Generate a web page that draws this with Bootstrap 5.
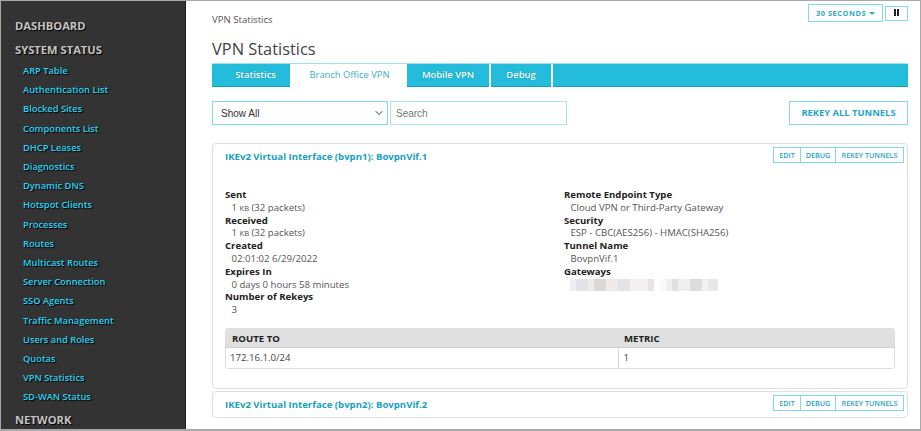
<!DOCTYPE html>
<html lang="en">
<head>
<meta charset="utf-8">
<title>VPN Statistics</title>
<link href="https://cdn.jsdelivr.net/npm/bootstrap@5.3.0/dist/css/bootstrap.min.css" rel="stylesheet">
<style>
html,body{height:100%;overflow:hidden}
body{font-family:"Open Sans",sans-serif;font-size:9.6px;color:#444;background:#fff}
.shell{height:431px;border:1px solid #a9a9a9;border-width:1px 1px 2px 1px;overflow:hidden}
.side{width:185px;flex:none;background:#333;border-right:1px solid #1e1e1e;padding-top:15px;overflow:hidden;height:100%}
.side-head{display:block;color:#c4c4c4;font-weight:700;font-size:11.2px;line-height:19px;padding-left:14px;margin-bottom:5px;text-decoration:none;text-shadow:1px 1px 1px #000}
.side-link{display:block;color:#27d3f3;font-weight:600;font-size:9.3px;line-height:19.2px;padding-left:22px;text-decoration:none;text-shadow:1px 1px 1px #000}
.side-list{margin-top:-3px;margin-bottom:3px}
.main-area{width:734px;flex:none;padding:0 12px 0 26px;position:relative}
.crumb{line-height:14px;padding-top:12px;color:#555}
.page-title{font-size:16.4px;font-weight:400;color:#444;line-height:24px;margin:10px 0 2px}
.tabbar{background:#23bcdb;border:0;border-bottom:1px solid #0ea2c2;border-top:1px solid #9fe0ee;height:24px;gap:0;flex-wrap:nowrap}
.tabbar .nav-link{height:23px;font-size:9.4px;font-weight:600;color:#fff;border:0;border-right:2px solid #fff;border-radius:0;padding:0;display:flex;align-items:center;justify-content:center;margin:0;background:transparent;text-shadow:0 0 1px #0b7f98}
.tabbar .nav-link.active{height:25px;margin-top:-1px;background:#fff;color:#3aaecb;font-weight:400;border:0;border-top:1px solid #9fe0ee;text-shadow:none;padding-bottom:1px}
.w-stat{width:80px;padding-left:9px!important}.w-branch{width:115px}.w-mobile{width:84px}.w-debug{width:62px}
.tool-row{margin-top:14px;height:24px}
.pick{width:176px;height:24px;font-family:"Liberation Sans",sans-serif;font-size:10px;padding:0 0 0 8px;border:1px solid #7fdcee;border-radius:0;color:#333;background-size:10px 8px;background-position:right 3px center}
.find{width:177px;height:24px;font-family:"Liberation Sans",sans-serif;font-size:10px;padding:0 5px;border:1px solid #a6e5f2;border-radius:0;margin-left:2px;color:#555}
.find::placeholder{color:#777;opacity:1}
.rekey-all{width:119px;height:24px;padding:0;font-size:9.4px;font-weight:700;color:#1fa6c7;border:1px solid #7fdcee;border-radius:0;background:#fff}
.vpn-card{border:1px solid #e0e0e0;border-radius:4px;background:#fff;--bs-card-border-color:#e0e0e0}
.vpn-card+.vpn-card{margin-top:2px}
.first-card{margin-top:18px;height:246px}
.second-card{height:27px}
.card-top{height:25px;padding:3px 3px 0 12px}
.card-name{font-size:9.6px;font-weight:700;color:#17a0c4;text-decoration:none;line-height:19px}
.mini{--bs-btn-padding-x:0;--bs-btn-padding-y:0;--bs-btn-border-radius:0;height:16px;font-size:7.2px;font-weight:600;line-height:14px;color:#1fa6c7;border:1px solid #7fdcee;background:#fff}
.mini-e{width:28px}.mini-d{width:36px}.mini-r{width:69px}
.detail{padding:20px 12px 0;line-height:12.8px;height:159px}
.detail dt{font-weight:700;color:#222;margin:0}
.detail dd{margin:0 0 0 6.5px;color:#555;height:12.8px}
.detail .col-left{width:339px;flex:none;padding:0}
.detail .col-right{flex:1;padding:0}
.kb{font-size:7.6px}
.route-wrap{margin:0 12px;border:1px solid #dcdcdc;border-radius:3px;overflow:hidden}
.route{margin:0;font-size:9.6px;table-layout:fixed;--bs-table-border-color:#d5d5d5}
.route th{background:#e0e0e0;height:18px;padding:0 6px;font-weight:700;color:#222;line-height:17px;border-bottom:1px solid #cfcfcf}
.route td{height:21px;padding:0 0 0 4px;line-height:20px;color:#444;border:0}
.route .split{border-left:1px solid #d5d5d5;padding-left:5px}
.route th.split{border-left:0;padding-left:6px}
.c-a{width:392px}
.refresh{position:absolute;top:3px;right:12px;display:flex;gap:2px;align-items:flex-start}
.btn-secs{width:75px;height:18px;padding:0;font-size:7.4px;font-weight:700;letter-spacing:.55px;color:#2ca9c8;border:1px solid #7fdcee;border-radius:0;background:#fff;line-height:15px}
.btn-secs::after{border-top-width:3px;border-right-width:3px;border-left-width:3px;vertical-align:1px;margin-left:3px}
.btn-pause{width:23px;height:15px;padding:0;border:1px solid #7fdcee;border-radius:0;margin-top:2px;background:#fff;display:flex;justify-content:center;gap:1px;padding-top:2px}
.btn-pause i{display:block;width:2px;height:7px;background:#222}
.blur-mask{display:block;margin-left:-1px;margin-top:0}
</style>
</head>
<body>
<div class="shell d-flex">
  <nav class="side">
    <a class="side-head" href="#">DASHBOARD</a>
    <a class="side-head" href="#">SYSTEM STATUS</a>
    <div class="side-list">
      <a class="side-link" href="#">ARP Table</a>
      <a class="side-link" href="#">Authentication List</a>
      <a class="side-link" href="#">Blocked Sites</a>
      <a class="side-link" href="#">Components List</a>
      <a class="side-link" href="#">DHCP Leases</a>
      <a class="side-link" href="#">Diagnostics</a>
      <a class="side-link" href="#">Dynamic DNS</a>
      <a class="side-link" href="#">Hotspot Clients</a>
      <a class="side-link" href="#">Processes</a>
      <a class="side-link" href="#">Routes</a>
      <a class="side-link" href="#">Multicast Routes</a>
      <a class="side-link" href="#">Server Connection</a>
      <a class="side-link" href="#">SSO Agents</a>
      <a class="side-link" href="#">Traffic Management</a>
      <a class="side-link" href="#">Users and Roles</a>
      <a class="side-link" href="#">Quotas</a>
      <a class="side-link" href="#">VPN Statistics</a>
      <a class="side-link" href="#">SD-WAN Status</a>
    </div>
    <a class="side-head" href="#">NETWORK</a>
  </nav>
  <main class="main-area">
    <div class="refresh">
      <button class="btn btn-secs dropdown-toggle" type="button">30 SECONDS</button>
      <button class="btn btn-pause" type="button" aria-label="Pause"><i></i><i></i></button>
    </div>
    <div class="crumb">VPN Statistics</div>
    <h1 class="page-title">VPN Statistics</h1>
    <ul class="nav nav-tabs tabbar">
      <li class="nav-item"><a class="nav-link w-stat" href="#">Statistics</a></li>
      <li class="nav-item"><a class="nav-link active w-branch" href="#">Branch Office VPN</a></li>
      <li class="nav-item"><a class="nav-link w-mobile" href="#">Mobile VPN</a></li>
      <li class="nav-item"><a class="nav-link w-debug" href="#">Debug</a></li>
    </ul>
    <div class="tool-row d-flex align-items-center">
      <select class="form-select pick" aria-label="Filter"><option>Show All</option></select>
      <input class="form-control find" type="text" placeholder="Search">
      <button class="btn rekey-all ms-auto" type="button">REKEY ALL TUNNELS</button>
    </div>
    <section class="card vpn-card first-card">
      <div class="card-top d-flex justify-content-between">
        <a class="card-name" href="#">IKEv2 Virtual Interface (bvpn1): BovpnVif.1</a>
        <div class="btn-group">
          <button class="btn mini mini-e" type="button">EDIT</button>
          <button class="btn mini mini-d" type="button">DEBUG</button>
          <button class="btn mini mini-r" type="button">REKEY TUNNELS</button>
        </div>
      </div>
      <div class="detail d-flex">
        <dl class="col-left m-0">
          <dt>Sent</dt><dd>1 <span class="kb">KB</span> (32 packets)</dd>
          <dt>Received</dt><dd>1 <span class="kb">KB</span> (32 packets)</dd>
          <dt>Created</dt><dd>02:01:02 6/29/2022</dd>
          <dt>Expires In</dt><dd>0 days 0 hours 58 minutes</dd>
          <dt>Number of Rekeys</dt><dd>3</dd>
        </dl>
        <dl class="col-right m-0">
          <dt>Remote Endpoint Type</dt><dd>Cloud VPN or Third-Party Gateway</dd>
          <dt>Security</dt><dd>ESP - CBC(AES256) - HMAC(SHA256)</dd>
          <dt>Tunnel Name</dt><dd>BovpnVif.1</dd>
          <dt>Gateways</dt>
          <dd><svg class="blur-mask" width="148" height="12" viewBox="0 0 148 12" aria-hidden="true">
            <rect width="148" height="12" fill="#f6f6f6"/>
            <rect x="0" width="6" height="12" fill="#eceef1"/><rect x="6" width="12" height="12" fill="#e2e4e9"/><rect x="18" width="6" height="12" fill="#ececec"/><rect x="24" width="12" height="12" fill="#dcdad8"/><rect x="36" width="12" height="12" fill="#eeeae8"/><rect x="48" width="12" height="12" fill="#e4e2e2"/><rect x="60" width="18" height="12" fill="#f2f0f0"/><rect x="78" width="6" height="12" fill="#e6e4e4"/><rect x="84" width="6" height="12" fill="#fff"/><rect x="90" y="0" width="6" height="12" fill="#f9f9f9"/><rect x="96" width="6" height="12" fill="#eef0f2"/><rect x="102" width="6" height="12" fill="#e0e0e0"/><rect x="108" width="12" height="12" fill="#eeeeee"/><rect x="120" width="12" height="12" fill="#dedcdc"/><rect x="132" width="6" height="12" fill="#f1f1f1"/><rect x="138" width="10" height="12" fill="#e8e8e8"/>
          </svg></dd>
        </dl>
      </div>
      <div class="route-wrap">
        <table class="table route">
          <colgroup><col class="c-a"><col></colgroup>
          <thead><tr><th>ROUTE TO</th><th class="split">METRIC</th></tr></thead>
          <tbody><tr><td>172.16.1.0/24</td><td class="split">1</td></tr></tbody>
        </table>
      </div>
    </section>
    <section class="card vpn-card second-card">
      <div class="card-top d-flex justify-content-between">
        <a class="card-name" href="#">IKEv2 Virtual Interface (bvpn2): BovpnVif.2</a>
        <div class="btn-group">
          <button class="btn mini mini-e" type="button">EDIT</button>
          <button class="btn mini mini-d" type="button">DEBUG</button>
          <button class="btn mini mini-r" type="button">REKEY TUNNELS</button>
        </div>
      </div>
    </section>
  </main>
</div>
<script src="https://cdn.jsdelivr.net/npm/bootstrap@5.3.0/dist/js/bootstrap.bundle.min.js"></script>
</body>
</html>
